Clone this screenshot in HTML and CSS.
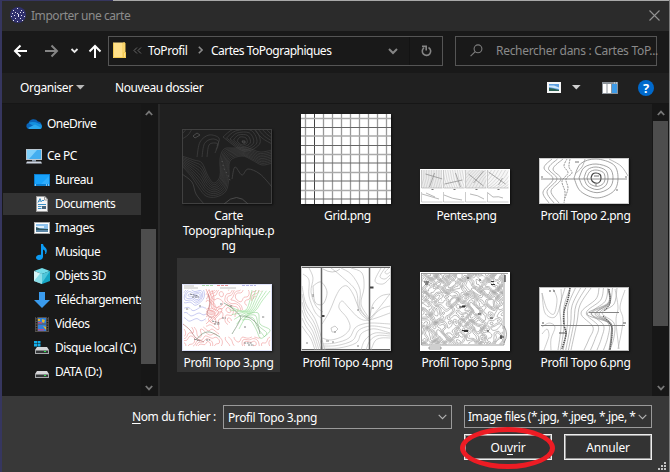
FILE: index.html
```html
<!DOCTYPE html>
<html lang="fr">
<head>
<meta charset="utf-8">
<title>Importer une carte</title>
<link rel="stylesheet" href="styles.css">
</head>
<body>
<div class="dialog">
  <header class="titlebar">
    <svg class="app-icon" width="16" height="16" viewBox="0 0 16 16"><circle cx="8" cy="8" r="8" fill="#30306c"/><path d="M7 1h1v1H7zM3 3h1v1H3zM11 3h1v1h-1zM2 6h1v1H2zM5 5h1v1H5zM10 5h1v1h-1zM13 5h1v1h-1zM4 8h1v1H4zM7 6h1v1H7zM8 7h1v3H8zM11 8h1v1h-1zM1 9h1v1H1zM14 9h1v1h-1zM5 11h1v1H5zM10 11h1v1h-1zM3 13h1v1H3zM12 13h1v1h-1zM7 14h1v1H7z" fill="#e6e6f4"/></svg>
    <h1 class="title">Importer une carte</h1>
    <svg class="close" width="11" height="11" viewBox="0 0 11 11"><path d="M.5.500l10 10M10.500.500l-10 10" stroke="#929292" stroke-width="1.100"/></svg>
  </header>

  <nav class="navbar">
    <svg class="arrows" width="106" height="42" viewBox="0 0 106 42" fill="none">
      <path d="M25 20H13.500M18.500 14.500L13 20l5.500 5.500" stroke="#fff" stroke-width="2"/>
      <path d="M43 20h11.500M49.500 14.500L55 20l-5.500 5.500" stroke="#858585" stroke-width="2"/>
      <path d="M69.500 18l3 3 3-3" stroke="#e8e8e8" stroke-width="1.800"/>
      <path d="M93 27V15.500M87.500 20.500L93 15l5.500 5.500" stroke="#fff" stroke-width="2"/>
    </svg>
    <div class="address">
      <svg width="14" height="17" viewBox="0 0 14 17"><path d="M0 .5h12V10l1 .5V16H0z" fill="#ffe08a"/><path d="M.5 1v14.500h10V10.500h2v5H10V1h2v9" fill="none" stroke="#f3ca52"/></svg>
      <svg class="crumb-more" width="9" height="7" viewBox="0 0 9 7" fill="none" stroke="#686868"><path d="M4 .5l-3 3 3 3M8 .5l-3 3 3 3"/></svg>
      <span class="crumb-a">ToProfil</span>
      <svg class="crumb-sep" width="5" height="8" viewBox="0 0 5 8" fill="none" stroke="#8a8a8a" stroke-width="1.600"><path d="M.8.800L4 4 .8 7.200"/></svg>
      <span class="crumb-b">Cartes ToPographiques</span>
      <svg class="address-drop" width="10" height="7" viewBox="0 0 10 7" fill="none" stroke="#858585" stroke-width="2"><path d="M1 1l4 4 4-4"/></svg>
      <span class="refresh"><svg width="11" height="12" viewBox="0 0 11 12" fill="none" stroke="#858585" stroke-width="1.600"><path d="M7.500 2.500A4.200 4.200 0 1 1 3 2.800M1 1.400h4.200v4"/></svg></span>
    </div>
    <div class="search">
      <svg width="13" height="13" viewBox="0 0 13 13" fill="none" stroke="#7d7d7d" stroke-width="1.100"><circle cx="8" cy="4.800" r="3.900"/><path d="M5.200 7.600L.6 12.200"/></svg>
      <span class="search-text">Rechercher dans : Cartes ToP...</span>
    </div>
  </nav>

  <div class="toolbar">
    <span class="organise">Organiser</span>
    <svg class="caret" width="9" height="5" viewBox="0 0 9 5"><path d="M0 0h8.600L4.300 4.600z" fill="#b8b8b8"/></svg>
    <span class="new-folder">Nouveau dossier</span>
    <svg class="view-icon" width="14" height="11" viewBox="0 0 14 11"><path fill="#f5f5f5" d="M0 0h14v11H0z"/><path fill="#5d9fe0" d="M2 2h10v7H2z"/><path fill="#cfe6fa" d="M2 3.500h5l5 2V7L2 5z"/><path fill="#2c6152" d="M2 6l4 .5 6 1.500v1H2z"/></svg>
    <svg class="caret caret-view" width="9" height="5" viewBox="0 0 9 5"><path d="M0 0h8.600L4.300 4.600z" fill="#d0d0d0"/></svg>
    <svg class="pane-icon" width="16" height="12" viewBox="0 0 16 12"><path fill="#8b9299" d="M0 0h16v12H0z"/><path fill="#fff" d="M1 2h3.500v9H1zM5.500 2H9v9H5.500z"/><path fill="#3d9be8" d="M10 2h5v9h-5z"/><path fill="#dceefc" d="M12 .5h1v1h-1zM14 .5h1v1h-1z"/></svg>
    <span class="help">?</span>
  </div>

  <main class="browser">
    <aside class="tree">
      <ul class="tree-list">
        <li class="node root onedrive"><svg width="16" height="16" viewBox="0 0 16 16"><path d="M3 13a3 3 0 0 1-.4-5.900A5.200 5.200 0 0 1 12 5.600a3.800 3.800 0 0 1 1 7.400z" fill="#0b64b8"/><path d="M2.500 7Q7 5 12.500 7.500 16 8 16 10.500 16 13 13 13z" fill="#1490df"/><path d="M2 12L9 8.500l6.500 3.500Q14.500 13 13 13H3.500z" fill="#2ba9ef"/></svg>OneDrive</li>
        <li class="node root"><svg width="16" height="16" viewBox="0 0 16 16"><path fill="#b9c7d2" d="M0 1h16v11H0z"/><path fill="#43aef0" d="M1 2h14v9H1z"/><path fill="#7fd0fb" d="M1 2h10L3 11H1z"/><path fill="#8b9bac" d="M6 12h4v1.500H6z"/><path fill="#cdd5e2" d="M1 13.500h14l1 2H0z"/></svg>Ce PC</li>
        <li class="node"><svg width="16" height="16" viewBox="0 0 16 16"><path fill="#0b7ed0" d="M0 2h16v12H0z"/><path fill="#18a2fb" d="M1 3h14v9H1z"/><path fill="#45b7ff" d="M7 12l8-8v8z" opacity=".5"/><path fill="#fff" d="M1 12.500h1v1H1zM12 12.500h1v1h-1zM14 12.500h1v1h-1z"/></svg>Bureau</li>
        <li class="node selected"><svg width="16" height="16" viewBox="0 0 16 16"><path fill="#f4f4f4" d="M2 .5h9l3 3v12H2z"/><path fill="none" stroke="#9a9a9a" d="M2.500.500H11L13.500 3.500v12h-11zM10.500 1v3h3"/><path d="M4 6.500l2-4 1.500 3.500M5 5h2M8 4.500h2M4 8.500h8M4 10.500h3.500M4 12.500h3.500" fill="none" stroke="#3c8fc4"/><path fill="#47657c" d="M8 10h4v3H8z"/></svg>Documents</li>
        <li class="node"><svg width="16" height="16" viewBox="0 0 16 16"><path fill="#a9a9a9" d="M0 2h16v12H0z"/><path fill="#fff" d="M1 3h14v10H1z"/><path fill="#8ec3ef" d="M2 4h12v8H2z"/><path fill="#e2f1fc" d="M2 6h8v2H2z"/><path fill="#2e5561" d="M2 7l4 1.500 8 .5v2H2z"/><path fill="#5c87a7" d="M2 10h12v2H2z"/></svg>Images</li>
        <li class="node"><svg width="16" height="16" viewBox="0 0 16 16"><path fill="#0c9bf3" d="M7 0h2q.3 2 2.300 3.500Q14 6 12 10h-1q1-3.500-2-4.500V13q-.5 3-4 3-3-.3-3-2.600Q2.500 10.500 7 10.800z"/></svg>Musique</li>
        <li class="node"><svg width="16" height="16" viewBox="0 0 16 16"><path fill="#73dce9" d="M0 3l8-3 8 3-8 3z"/><path fill="#d5f5f7" d="M0 3l8 3v10l-8-3z"/><path fill="#15a6c4" d="M16 3L8 6v10l8-3z"/><path fill="#68d4e3" d="M0 13l8-10v13zM8 6l8-3-8 12z" opacity=".7"/></svg>Objets 3D</li>
        <li class="node"><svg width="16" height="16" viewBox="0 0 16 16"><path fill="#3a9bed" d="M5 0h6v8h5l-8 8-8-8h5z"/></svg>Téléchargements</li>
        <li class="node"><svg width="16" height="16" viewBox="0 0 16 16"><path fill="#56514d" d="M1 1h14v15H1z"/><path d="M2.500 1v15M13.500 1v15" stroke="#181818" stroke-width="1.400" stroke-dasharray="1.300 1.200"/><path fill="#327fda" d="M4 2h8v5.500H4zM4 8.500h8V15H4z"/><path fill="#e2b72b" d="M8 3l3 1-1 3-2-1zM4 3h2v2H4zM9 10l3 1v3z"/><path fill="#b74c85" d="M4 6h4v1.500H4zM4 13h6v1.500H4z"/></svg>Vidéos</li>
        <li class="node"><svg width="16" height="16" viewBox="0 0 16 16"><path fill="#13aeea" d="M0 1h3v2.500H0zM3.500 1h3v2.500h-3zM0 4h3v2.500H0zM3.500 4h3v2.500h-3z"/><path fill="#d6d6d8" d="M3 7h10l2 3H1z"/><path fill="#a6a8aa" d="M1 10h14v4H1z"/><path fill="#343638" d="M2 10.700h12V13H2z"/><path fill="#2de04b" d="M10 11h2v1h-2z"/></svg>Disque local (C:)</li>
        <li class="node"><svg width="16" height="16" viewBox="0 0 16 16"><path fill="#d6d6d8" d="M3 7h10l2 3H1z"/><path fill="#a6a8aa" d="M1 10h14v4H1z"/><path fill="#343638" d="M2 10.700h12V13H2z"/><path fill="#2de04b" d="M10 11h2v1h-2z"/></svg>DATA (D:)</li>
      </ul>
      <div class="scroll scroll-tree">
        <svg width="8" height="6" viewBox="0 0 8 6"><path d="M.8 5L4 1.600 7.200 5"/></svg>
        <i class="thumb"></i>
        <svg width="8" height="6" viewBox="0 0 8 6"><path d="M.8 1L4 4.400 7.200 1"/></svg>
      </div>
    </aside>

    <section class="files">
      <figure class="file"><svg id="carte" width="90" height="75" viewBox="0 0 90 75"></svg><figcaption>Carte Topographique.p<wbr>ng</figcaption></figure>
      <figure class="file"><svg id="grid" width="90" height="90" viewBox="0 0 90 90"></svg><figcaption>Grid.png</figcaption></figure>
      <figure class="file"><svg id="pentes" width="90" height="35" viewBox="0 0 90 35"></svg><figcaption>Pentes.png</figcaption></figure>
      <figure class="file"><svg id="topo2" width="90" height="46" viewBox="0 0 90 46"></svg><figcaption>Profil Topo 2.png</figcaption></figure>
      <figure class="file picked"><svg id="topo3" width="90" height="67" viewBox="0 0 90 67"></svg><figcaption>Profil Topo 3.png</figcaption></figure>
      <figure class="file"><svg id="topo4" width="90" height="85" viewBox="0 0 90 85"></svg><figcaption>Profil Topo 4.png</figcaption></figure>
      <figure class="file"><svg id="topo5" width="90" height="79" viewBox="0 0 90 79"></svg><figcaption>Profil Topo 5.png</figcaption></figure>
      <figure class="file"><svg id="topo6" width="90" height="64" viewBox="0 0 90 64"></svg><figcaption>Profil Topo 6.png</figcaption></figure>
    </section>
    <div class="scroll scroll-files">
      <svg width="8" height="6" viewBox="0 0 8 6"><path d="M.8 5L4 1.600 7.200 5"/></svg>
      <i class="thumb"></i>
      <svg width="8" height="6" viewBox="0 0 8 6"><path d="M.8 1L4 4.400 7.200 1"/></svg>
    </div>
  </main>

  <footer class="footer">
    <div class="row">
      <label class="name-label"><u>N</u>om du fichier :</label>
      <div class="combo name-combo"><span>Profil Topo 3.png</span><svg width="9" height="6" viewBox="0 0 9 6"><path d="M.7.800l3.800 3.800L8.300.800"/></svg></div>
      <div class="combo type-combo"><span>Image files (*.jpg, *.jpeg, *.jpe, *</span><svg width="9" height="6" viewBox="0 0 9 6"><path d="M.7.800l3.800 3.800L8.300.800"/></svg></div>
    </div>
    <div class="row buttons">
      <div class="button open"><span>Ou<u>v</u>rir</span><i class="highlight"></i></div>
      <div class="button"><span>Annuler</span></div>
    </div>
    <svg class="grip" width="8" height="8" viewBox="0 0 8 8"><path d="M6 0h2v2H6zM3 3h2v2H3zM6 3h2v2H6zM0 6h2v2H0zM3 6h2v2H3zM6 6h2v2H6z" fill="#c4c4c4"/></svg>
  </footer>
</div>
<script src="maps.js"></script>
</body>
</html>
```
FILE: styles.css
```css
* { box-sizing: border-box; }
body { margin: 0; background: #383838; font: 12px/15px "Noto Sans", "Open Sans", sans-serif; color: #fff; letter-spacing: -0.4px; }
svg { display: block; flex: none; }
u { text-decoration: underline; text-underline-offset: 2px; text-decoration-skip-ink: none; }

.dialog { width: 670px; height: 472px; display: flex; flex-direction: column; overflow: hidden; border-left: 2px solid #36365f; border-right: 1px solid #7d7d7d; }

.titlebar { height: 31px; flex: none; display: flex; align-items: center; background: linear-gradient(90deg, #36365f 111px, #a9a9a9 111px) 0 0 / 100% 1px no-repeat #2b2b2b; padding: 0 9px 1px 8px; }
.title { margin: 0 auto 0 5px; font-size: 12px; font-weight: 400; color: #8c8c8c; letter-spacing: -0.45px; }

.navbar { height: 42px; flex: none; display: flex; background: #191919; }
.address { width: 335px; height: 30px; margin-top: 5px; border: 1px solid #555; display: flex; align-items: center; padding: 0 0 2px 4px; white-space: nowrap; }
.crumb-more { margin: 0 6px 0 6px; }
.crumb-a { width: 50px; }
.crumb-sep { margin-right: 8px; }
.crumb-b { letter-spacing: -0.5px; }
.address-drop { margin: 2px 0 0 auto; }
.refresh { margin: 0 0 -2px 11px; border-left: 1px solid #131313; height: 28px; width: 33px; display: flex; align-items: center; padding-left: 11px; }
.search { width: 202px; height: 30px; margin: 5px 0 0 12px; border: 1px solid #555; display: flex; align-items: center; padding: 0 0 1px 14px; color: #8a8a8a; white-space: nowrap; }
.search-text { margin-left: 13px; letter-spacing: -0.3px; }

.toolbar { height: 31px; flex: none; display: flex; align-items: center; background: #202020; border-bottom: 1px solid #161616; padding: 0 15px 1px 18px; }
.organise { width: 56px; }
.new-folder { margin: 0 auto 0 30px; letter-spacing: -0.45px; }
.caret-view { margin: 0 21px 0 11px; }
.pane-icon { margin-right: 20px; }
.help { width: 16px; height: 16px; border-radius: 50%; background: #0069cc; text-align: center; font: 700 13px/16px "Noto Sans", sans-serif; letter-spacing: 0; }

.browser { height: 292px; flex: none; display: flex; background: #202020; }
.tree { width: 158px; flex: none; display: flex; background: #191919; border-right: 2px solid #2a2a2a; }
.tree-list { width: 139px; margin: 0; padding: 8px 0 0 1px; list-style: none; }
.node { height: 24px; padding: 0 0 1px 31px; display: flex; align-items: center; gap: 5px; white-space: nowrap; letter-spacing: -0.5px; }
.root { padding-left: 23px; }
.onedrive { margin-bottom: 8px; }
.selected { background: linear-gradient(#333, #333) 0 1px / 100% 22px no-repeat; }

.scroll { background: #171717; display: flex; flex-direction: column; align-items: center; justify-content: space-between; padding: 6px 0 5px; z-index: 1; }
.scroll svg { fill: none; stroke: #777; stroke-width: 1.800; }
.scroll .thumb { width: 100%; background: #4d4d4d; }
.scroll-tree { width: 17px; padding-right: 2px; }
.scroll-tree .thumb { height: 135px; margin: auto 0 21px; }
.scroll-files { width: 17px; margin-left: auto; padding-right: 1px; padding-left: 1px; }
.scroll-files .thumb { height: 205px; margin: 5px 0 auto; }

.files { display: grid; grid-template-columns: repeat(4, 103px); grid-template-rows: 135px 114px; gap: 12px 16px; padding: 7px 0 0 17px; flex: none; }
.file { margin: 0; padding: 3px 0 0; display: flex; flex-direction: column; align-items: center; }
.file svg { margin: auto 3px 0 0; box-shadow: 1px 1px 2px #0009; }
.file figcaption { width: 96px; height: 21px; padding-top: 4px; text-align: center; letter-spacing: -0.35px; }
.file:nth-child(-n+4) { height: 114px; }
.picked { background: #333; }

.footer { flex: 1; background: #383838; position: relative; padding-top: 9px; }
.row { display: flex; }
.name-label { width: 221px; padding: 4px 0 0 130px; white-space: nowrap; }
.combo { height: 24px; border: 1px solid #9a9a9a; background: #333; display: flex; align-items: center; justify-content: space-between; padding: 0 4px; white-space: nowrap; }
.combo svg { fill: none; stroke: #b4b4b4; stroke-width: 1.100; }
.name-combo { width: 229px; background: #383838; }
.type-combo { width: 188px; height: 23px; margin-left: 12px; padding-left: 3px; letter-spacing: -0.45px; }
.buttons { padding: 5px 0 0 462px; gap: 12px; }
.button { width: 88px; height: 26px; border: 1px solid #eee; outline: 1px solid #999; outline-offset: -2px; background: #333; display: grid; place-items: center; position: relative; letter-spacing: -0.15px; }
.highlight { position: absolute; left: -5px; top: -8px; width: 95px; height: 42px; border: 5px solid #ed1c24; border-radius: 50%; }
.grip { position: absolute; right: 3px; bottom: 2px; }
```
FILE: maps.js
```js
const NS = 'http://www.w3.org/2000/svg';

function add(id, tag, attrs) {
  const el = document.createElementNS(NS, tag);
  for (const k in attrs) el.setAttribute(k, attrs[k]);
  document.getElementById(id).appendChild(el);
}
function paper(id, w, h, fill, stroke) {
  add(id, 'rect', { x: 0, y: 0, width: w, height: h, fill });
  if (stroke) add(id, 'rect', { x: .5, y: .5, width: w - 1, height: h - 1, fill: 'none', stroke });
}
function line(id, d, stroke, width = .6, extra = {}) {
  add(id, 'path', { d, stroke, 'stroke-width': width, fill: 'none', ...extra });
}
// Catmull-Rom spline through a flat list of coordinates
function smooth(p) {
  const n = p.length / 2, at = i => { i = Math.max(0, Math.min(n - 1, i)); return [p[2 * i], p[2 * i + 1]]; };
  let d = `M${p[0]} ${p[1]}`;
  for (let i = 0; i < n - 1; i++) {
    const [a, b, c, e] = [at(i - 1), at(i), at(i + 1), at(i + 2)];
    d += `C${b[0] + (c[0] - a[0]) / 6} ${b[1] + (c[1] - a[1]) / 6} ${c[0] - (e[0] - b[0]) / 6} ${c[1] - (e[1] - b[1]) / 6} ${c[0]} ${c[1]}`;
  }
  return d;
}
// n contour lines blended from curve a to curve b
function family(id, a, b, n, stroke, width) {
  for (let i = 0; i < n; i++) {
    const t = n > 1 ? i / (n - 1) : 0;
    line(id, smooth(a.map((v, k) => v + (b[k] - v) * t)), stroke, width);
  }
}
// iso-lines of a height field, by marching squares; NaN marks a hole
function contours(id, w, h, field, levels, stroke, width, x0 = 0, y0 = 0) {
  const s = 1;
  let d = '';
  for (let y = y0; y < h; y += s) for (let x = x0; x < w; x += s) {
    const q = [[x, y], [x + s, y], [x + s, y + s], [x, y + s]], v = q.map(c => field(c[0], c[1]));
    if (v.some(Number.isNaN)) continue;
    for (const l of levels) {
      const pts = [];
      for (let i = 0; i < 4; i++) {
        const j = (i + 1) % 4;
        if ((v[i] < l) !== (v[j] < l)) {
          const t = (l - v[i]) / (v[j] - v[i]);
          pts.push((q[i][0] + (q[j][0] - q[i][0]) * t).toFixed(2) + ' ' + (q[i][1] + (q[j][1] - q[i][1]) * t).toFixed(2));
        }
      }
      for (let i = 0; i + 1 < pts.length; i += 2) d += `M${pts[i]}L${pts[i + 1]}`;
    }
  }
  line(id, d, stroke, width);
}

// Carte Topographique
paper('carte', 90, 75, '#202020', '#404040');
family('carte', [0, 27, 12, 31, 20, 34, 26, 47, 32, 54, 38, 47, 38, 30, 42, 20, 52, 19, 66, 19, 78, 23, 90, 21],
  [0, 37, 9, 47, 17, 59, 24, 67, 34, 68, 44, 62, 47, 48, 48, 32, 60, 27, 70, 31, 80, 36, 90, 34], 9, '#444', .6);
family('carte', [55, 12, 58, 8, 64, 9, 65, 14, 60, 16, 55, 12], [41, 8, 52, 0, 71, -1, 78, 14, 62, 22, 41, 8], 5, '#444', .7);
family('carte', [72, 0, 80, 9, 90, 15], [84, 0, 87, 3, 90, 6], 4, '#444', .7);
family('carte', [15, 28, 18, 13, 27, 6, 37, 9, 35, 17], [25, 28, 27, 16, 33, 14, 36, 16, 33, 24], 3, '#444', .7);
family('carte', [0, 10, 6, 6, 10, 0], [0, 4, 2, 3, 4, 0], 2, '#444', .7);
line('carte', smooth([0, 45, 10, 53, 14, 65, 22, 75]) + smooth([50, 50, 53, 38, 60, 46, 66, 40, 78, 45, 90, 58]), '#4b4b4b', .7);
line('carte', 'M42 75Q55 62 66 75M11 7l4-3 3 2-5 3zM60 12h3v2h-2z', '#555', .8);
line('carte', 'M40 32l2 8 4 6 3 8', '#5c5c5c', 1, { 'stroke-dasharray': '1 3' });

// Grid
paper('grid', 90, 90, '#fff');
[4.5, 13.500, 22.500, 31.500, 40.500, 49.500, 58.500, 67.500, 76.500, 85.500].forEach((x, i) => line('grid', `M${x} 0V90`, i === 1 ? '#444' : '#999', i === 1 ? 1 : 1.300));
[4.5, 13.500, 22, 31.500, 40.500, 49, 58.500, 67, 76.500, 85].forEach((y, i) => line('grid', `M0 ${y}H90`, i % 2 ? '#666' : '#aaa', i % 2 ? 1 : 1.300));

// Pentes
paper('pentes', 90, 35, '#fff');
for (let k = 0; k < 4; k++) {
  const x = 1.500 + k * 22;
  add('pentes', 'svg', { x, y: 1, width: 21, height: 18, id: 'slope' + k });
  add('slope' + k, 'rect', { width: 21, height: 18, fill: k % 2 ? '#f6f6f6' : '#ececec' });
  for (let i = -3; i < 11; i++) line('slope' + k, [`M${i * 2.500} 0q1 8-3 18`, `M${i * 2.400 - 3} 0q1 10 5 18`, `M${i * 3.300} 18Q${i * 3 + 5} 8 ${i * 3 + 14} 0`, `M${i * 3.500 - 5} 18q10-6 16-18`][k], '#b8b8b8', .45);
  line('slope' + k, ['M4 4l17 5M13 3L8 17', 'M1 14l18-4M12 3l5 14', 'M3 4l15 12M18 1L8 13', 'M1 2l17 12M15 8l-4 7'][k], '#888', .7);
  line('pentes', `M${x} 1v18h21M${x} 23v10h21`, '#aaa', .6);
  line('pentes', [`M2 25l17 5M6 24l9 4`, 'M24 26q8 4 18 5', 'M50 25q8 1 14 5', 'M68 24l5 4q6-1 10 1'][k], '#999', .7);
  line('pentes', `M${x + 10} 20.500h2`, '#777', 1);
}

// Profil Topo 2
paper('topo2', 90, 46, '#fff', '#ccc');
family('topo2', [13, 1, 5, 10, 14, 21, 4, 34, 10, 45], [24, 1, 14, 11, 22, 21, 12, 33, 20, 45], 3, '#999', .8);
line('topo2', smooth([28, 1, 25, 8, 29, 15, 23, 23, 26, 34, 25, 45]) + smooth([31, 1, 30, 9, 33, 15, 27, 21, 29, 30, 26, 40]), '#999', 1, { 'stroke-dasharray': '2 .8' });
[[5, 5], [9, 8], [12, 11], [17, 14], [22, 19]].forEach(([rx, ry], i) => line('topo2', smooth([57 - rx, 20, 57 - rx * .7, 20 - ry * .75, 57, 20 - ry, 57 + rx * .8, 20 - ry * .7, 57 + rx, 20, 57 + rx * .8, 20 + ry * .7, 58, 20 + ry * 1.050, 57 - rx * .7, 20 + ry * .7, 57 - rx, 20]), i ? '#8c8c8c' : '#444', i ? .8 : 1.200));
line('topo2', 'M2 21H88', '#777', .8);
line('topo2', smooth([36, 16, 43, 9, 46, 1]) + smooth([70, 1, 82, 8, 89, 18]), '#999', .7);
line('topo2', 'M55 18h5M56 27h2M36 4h4M2 19h2M86 19h2M77 32h2', '#777', 1);

// Profil Topo 4
paper('topo4', 90, 85, '#fff', '#ccc');
line('topo4', 'M1 1.500H89M1 83.500H89', '#666', 1);
family('topo4', [1, 20, 5, 38, 15, 55, 24, 84], [1, 60, 5, 66, 10, 73, 14, 84], 6, '#b4b4b4', .6);
family('topo4', [21, 72, 30, 74, 42, 70, 49, 62, 46, 52, 38, 42, 41, 35, 48, 42, 58, 52, 68, 54, 89, 47], [21, 58, 26, 50, 30, 42, 35, 30, 40, 22, 46, 20, 52, 28, 57, 40, 63, 49, 70, 51, 89, 28], 2, '#b4b4b4', .6);
family('topo4', [21, 78, 34, 77, 48, 72, 54, 62, 62, 58, 72, 57, 89, 58], [21, 82, 38, 82, 55, 77, 60, 68, 67, 64, 75, 63, 89, 67], 3, '#b4b4b4', .6);
family('topo4', [30, 2, 40, 10, 55, 25, 58, 45, 68, 55], [50, 2, 61, 7, 63, 22, 60, 38, 68, 52], 3, '#b4b4b4', .6);
family('topo4', [70, 84, 74, 75, 80, 72, 89, 72], [60, 84, 64, 74, 74, 67, 89, 68], 3, '#b4b4b4', .6);
family('topo4', [80, 2, 74, 15, 82, 18, 89, 12], [88, 2, 84, 6, 86, 8, 89, 6], 3, '#b4b4b4', .6);
family('topo4', [69, 50, 72, 38, 80, 30, 89, 28], [69, 54, 76, 46, 82, 42, 89, 40], 2, '#b4b4b4', .6);
family('topo4', [2, 8, 8, 14, 8, 30, 14, 46, 20, 52], [8, 2, 12, 12, 10, 26, 15, 40, 22, 46], 2, '#b4b4b4', .6);
line('topo4', smooth([12, 20, 20, 16, 26, 26, 22, 38, 14, 36, 12, 20]) + 'M30 62l4-2 3 3-3 3h-3zM22 3q10 6 17 0', '#aaa', .6);
line('topo4', 'M20.500 1V84M68.500 1V84', '#666', 1.500);
line('topo4', 'M21 50h2.500M69 21.500h3.500', '#444', 1.800);
line('topo4', 'M25 75h3M31 76h2M56 44h2M71 42h2M12 28v3M33 66h2M5 77h2M56 80h2', '#888', 1);

// Profil Topo 6
paper('topo6', 90, 64, '#fff', '#bbb');
family('topo6', [3, 6, 8, 22, 15, 27, 18, 12, 14, 2], [3, 6, 6, 26, 16, 30, 22, 15, 22, 2], 2, '#aaa', .6);
family('topo6', [3, 40, 10, 36, 16, 40, 12, 52, 12, 63], [3, 47, 8, 42, 10, 48, 8, 55, 5, 63], 2, '#aaa', .6);
family('topo6', [26, 1, 21, 20, 22, 40, 19, 63], [52, 1, 41, 18, 38, 35, 32, 63], 6, '#999', .6);
family('topo6', [60, 1, 57, 12, 42, 26, 54, 40, 50, 52, 45, 63], [78, 1, 75, 17, 63, 26, 75, 36, 75, 50, 71, 63], 5, '#999', .6);
family('topo6', [69, 2, 69, 16, 48, 27, 70, 36, 72, 48, 70, 63], [70, 2, 71, 16, 60, 27, 72, 36, 73, 48, 71, 63], 4, '#888', .6);
family('topo6', [76, 2, 79, 20, 77, 34, 80, 62], [86, 3, 81, 20, 84, 34, 79, 62], 2, '#aaa', .6);
line('topo6', smooth([31, 1, 29, 12, 25, 25, 25, 38, 27, 47, 23, 62]), '#555', 1.600, { 'stroke-dasharray': '1.500 .7' });
line('topo6', smooth([70, 2, 71, 16, 65, 24]) + smooth([64, 29, 72, 38, 73, 48, 71, 63]), '#666', 1.200, { 'stroke-dasharray': '1.500 .7' });
line('topo6', 'M2 38.500H86M50 25.500H80', '#777', .9);
line('topo6', 'M3 36h2M84 36h3M20 46h8M10 4h2M14 4h2', '#555', 1.200);

// Profil Topo 5
paper('topo5', 90, 79, '#fff');
const rough = (x, y) => 1.300 * Math.sin(x * .17 + 2 * Math.sin(y * .13)) + 1.200 * Math.sin(y * .2 + 1.800 * Math.sin(x * .15 + 1)) + .45 * Math.sin(x * .5 + 1.500 * Math.sin(y * .45)) + .45 * Math.sin(y * .55 + 1.500 * Math.sin(x * .4));
contours('topo5', 83, 72, rough, [-2.2, -1.650, -1.100, -.55, 0, .55, 1.100, 1.650, 2.200], '#7c7c7c', .5, 2, 2);
line('topo5', 'M1 1.500H88M1.500 1V73H84V2M9 75h12v2H9zM84 54q5 8 0 17', '#777', .7);
line('topo5', 'M4 10h5M5 12h3M71 12.500h4M71 9.500h3M39 35h6M42 34h4M42 58.500h6M44 59.500h4M80 65h4M81 63v4M58 42h3M67 59h2M59 8h2M47 6h2M70 46h3M85 3v7', '#333', 1.200);

// Profil Topo 3
paper('topo3', 90, 67, '#fff', '#dfe3fa');
const hills = (x, y) => 3 * Math.exp(-((x - 35) ** 2 + (y - 38) ** 2) / 170) + 2.500 * Math.exp(-((x - 66) ** 2 + (y - 62) ** 2) / 110) + .8 * Math.sin(x * .16 + 1.500 * Math.sin(y * .12)) + .4 * Math.sin(y * .33 + x * .12) + .2 * Math.sin(x * .6 - y * .3);
contours('topo3', 88, 62, (x, y) => (x < 24 && y < 43 || y < 53 && x + y > 87) ? NaN : hills(x, y), [-.8, -.3, .2, .7, 1.200, 1.700, 2.200, 2.700, 3.200], '#f09a9a', .6, 2, 6);
contours('topo3', 24, 48, (x, y) => Math.hypot(x - 12, (y - 12) * 1.500) / 4 + .5 * Math.sin(x * .5 + y * .2), [.6, 1.100, 1.600, 2.200, 3, 5, 7, 9], '#a5aae8', .6, 2, 6);
family('topo3', [24, 5, 28, 16, 27, 25, 33, 30, 24, 40], [30, 6, 32, 14, 32, 22, 40, 26, 32, 36], 3, '#ee8f8f', .6);
family('topo3', [88, 7, 80, 17, 74, 26, 64, 33, 57, 45], [70, 6, 68, 16, 64, 26, 56, 26, 45, 21], 6, '#8fdc8f', .6);
family('topo3', [65, 30, 76, 29, 78, 40, 88, 46, 82, 53], [60, 36, 68, 36, 74, 45, 78, 54, 82, 53], 4, '#8fd28f', .6);
line('topo3', smooth([42, 19, 50, 24, 58, 32, 57, 38, 50, 50]) + smooth([58, 32, 66, 33, 75, 40, 78, 50]) + smooth([14, 56, 20, 50, 28, 48, 38, 53]), '#7c957c', .7);
line('topo3', smooth([1, 40, 8, 46, 14, 54, 22, 58]) + smooth([26, 10, 28, 20, 25, 30, 30, 34]), '#b87878', .7);
line('topo3', 'M8 10l8 2M10 13l7 0M30 37l8 2M32 40l6 0M4 25h3M17 22h2M38 20h3M12 55l6 2M80 33h3M62 59h8M66 61h6M48 22h3M24 56h4M62 43h2M40 34h4', '#666', .8, { 'stroke-dasharray': '2 .8' });
line('topo3', 'M2 2h10M2 4h14M38 4h16', '#999', .6);
line('topo3', 'M35 1.500h12', '#d66', .7, { 'stroke-dasharray': '3 1' });
line('topo3', 'M20 1.500h12', '#8c8', .7, { 'stroke-dasharray': '3 1' });
line('topo3', 'M60 1.500h14', '#99d', .7, { 'stroke-dasharray': '3 1' });
```
